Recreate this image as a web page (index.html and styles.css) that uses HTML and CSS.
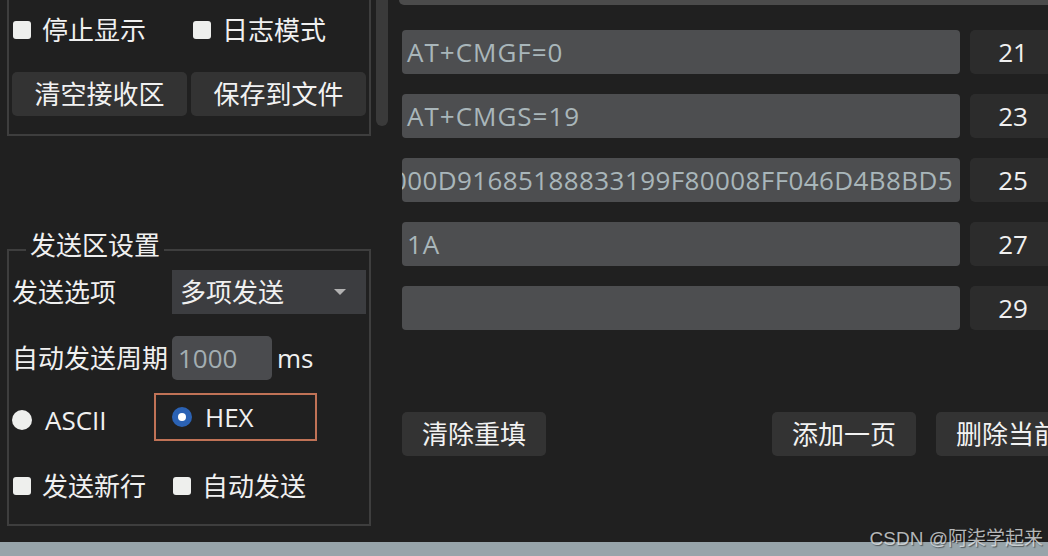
FILE: index.html
```html
<!DOCTYPE html>
<html lang="zh-CN">
<head>
<meta charset="utf-8">
<title>串口助手</title>
<link rel="stylesheet" href="styles.css">
</head>
<body>
<div class="app">
  <div class="main">
    <aside class="left">
      <div class="left-top">
        <section class="group group-recv">
          <div class="check-row">
            <label class="check"><span class="box"></span><span>停止显示</span></label>
            <label class="check"><span class="box"></span><span>日志模式</span></label>
          </div>
          <div class="btn-row">
            <button class="btn">清空接收区</button>
            <button class="btn">保存到文件</button>
          </div>
        </section>
        <div class="scrollbar"></div>
      </div>
      <fieldset class="group-send">
        <legend>发送区设置</legend>
        <div class="form">
          <span class="label">发送选项</span>
          <div class="combo"><span>多项发送</span><span class="arrow"></span></div>
          <span class="label">自动发送周期</span>
          <div class="period"><div class="spin">1000</div><span>ms</span></div>
          <label class="radio"><span class="dot"></span><span>ASCII</span></label>
          <label class="radio checked focused"><span class="dot"></span><span>HEX</span></label>
          <label class="check"><span class="box"></span><span>发送新行</span></label>
          <label class="check"><span class="box"></span><span>自动发送</span></label>
        </div>
      </fieldset>
    </aside>
    <section class="right">
      <div class="topbar"></div>
      <div class="rows">
        <div class="row"><div class="field">AT+CMGF=0</div><div class="num">21</div></div>
        <div class="row"><div class="field">AT+CMGS=19</div><div class="num">23</div></div>
        <div class="row"><div class="field scrolled"><span>0011000D91685188833199F80008FF046D4B8BD5</span></div><div class="num">25</div></div>
        <div class="row"><div class="field">1A</div><div class="num">27</div></div>
        <div class="row"><div class="field"></div><div class="num">29</div></div>
      </div>
      <div class="actions">
        <button class="btn action">清除重填</button>
        <button class="btn action push">添加一页</button>
        <button class="btn action">删除当前页</button>
      </div>
    </section>
  </div>
  <div class="statusbar"></div>
  <div class="watermark">CSDN @阿柒学起来</div>
</div>
</body>
</html>
```

FILE: styles.css
```css
* {
  box-sizing: border-box;
}

html, body {
  margin: 0;
  padding: 0;
}

body {
  width: 1048px;
  height: 556px;
  overflow: hidden;
  background: #202020;
  color: #f0f0f0;
  font-family: "Open Sans", "Noto Sans CJK SC", sans-serif;
  font-size: 26px;
}

.app {
  position: relative;
  width: 1048px;
  height: 556px;
  display: flex;
  flex-direction: column;
}

.main {
  height: 542px;
  display: flex;
  overflow: hidden;
}

/* ---------- left column ---------- */
.left {
  width: 399px;
  flex: none;
  padding-left: 7px;
  display: flex;
  flex-direction: column;
}

.left-top {
  display: flex;
  align-items: flex-start;
  gap: 5px;
}

.group {
  border: 2px solid #3e3e3e;
  border-top: none;
}

.group-recv {
  width: 364px;
  height: 136px;
  padding: 8px 3px 18px;
  display: flex;
  flex-direction: column;
  gap: 20px;
}

.scrollbar {
  width: 12px;
  height: 126px;
  background: #3a3a3a;
  border-radius: 0 0 6px 6px;
}

.check-row {
  height: 44px;
  display: flex;
  align-items: center;
  gap: 46px;
}

.check {
  display: flex;
  align-items: center;
  gap: 11px;
  padding-left: 1px;
  line-height: 30px;
}

.check .box {
  width: 18px;
  height: 18px;
  border-radius: 3px;
  background: #eeefed;
  flex: none;
}

.btn-row {
  display: flex;
  gap: 4px;
}

.btn {
  height: 44px;
  border: none;
  border-radius: 5px;
  background: #333333;
  color: #f2f2f2;
  font-family: "Open Sans", "Noto Sans CJK SC", sans-serif;
  font-size: 26px;
  line-height: 30px;
  padding: 0;
}

.btn-row .btn {
  flex: 1;
}

/* send settings group */
.group-send {
  width: 364px;
  margin: 96px 0 0;
  padding: 2px 3px 12px;
  border: 2px solid #3e3e3e;
  min-width: 0;
}

.group-send legend {
  margin-left: 14px;
  padding: 0 4px 10px;
  line-height: 26px;
  font-size: 26px;
}

.form {
  display: grid;
  grid-template-columns: 160px 194px;
  grid-template-rows: 44px 44px 36px 52px;
  row-gap: 22px;
  align-items: center;
}

.label {
  line-height: 30px;
}

.combo {
  height: 44px;
  background: #3c3d40;
  display: flex;
  align-items: center;
  justify-content: space-between;
  padding: 0 20px 0 8px;
  line-height: 30px;
}

.arrow {
  width: 0;
  height: 0;
  border-left: 6px solid transparent;
  border-right: 6px solid transparent;
  border-top: 6px solid #b2b2b2;
}

.period {
  display: flex;
  align-items: center;
  gap: 5px;
  line-height: 30px;
}

.spin {
  width: 100px;
  height: 44px;
  border-radius: 5px;
  background: #4a4b4e;
  color: #a3aeb2;
  padding-left: 6px;
  display: flex;
  align-items: center;
}

.radio {
  display: flex;
  align-items: center;
  gap: 13px;
  line-height: 30px;
}

.radio .dot {
  width: 20px;
  height: 20px;
  border-radius: 50%;
  background: #eeefed;
  flex: none;
}

.radio.checked .dot {
  background: #2b62b4;
  position: relative;
}

.radio.checked .dot::after {
  content: "";
  position: absolute;
  left: 6px;
  top: 6px;
  width: 8px;
  height: 8px;
  border-radius: 50%;
  background: #ffffff;
}

.radio.focused {
  margin-left: -16px;
  padding-left: 16px;
  width: 159px;
  height: 44px;
  margin-top: -6px;
  outline: 2px solid #c07256;
  box-shadow: 3px 3px 0 -1px #4a4a4a;
}

/* ---------- right column ---------- */
.right {
  width: 649px;
  flex: none;
  overflow: hidden;
  display: flex;
  flex-direction: column;
}

.topbar {
  height: 5px;
  background: #4b4b4b;
  border-radius: 0 0 0 5px;
}

.rows {
  margin-top: 25px;
  padding-left: 3px;
  display: flex;
  flex-direction: column;
  gap: 20px;
}

.row {
  display: flex;
  gap: 10px;
  width: 654px;
}

.field {
  width: 558px;
  height: 44px;
  flex: none;
  background: #4d4e50;
  border-radius: 4px;
  color: #a9b6ba;
  padding: 0 8px 0 5px;
  display: flex;
  align-items: center;
  white-space: nowrap;
  overflow: hidden;
  line-height: 30px;
  letter-spacing: 1px;
}

.field.scrolled {
  justify-content: flex-end;
  padding-right: 7px;
  letter-spacing: 0.4px;
}

.field.scrolled span {
  flex: none;
}

.num {
  width: 86px;
  height: 44px;
  flex: none;
  background: #2c2c2c;
  border-radius: 5px;
  display: flex;
  align-items: center;
  justify-content: center;
  line-height: 30px;
}

.actions {
  margin-top: 82px;
  padding-left: 3px;
  display: flex;
  gap: 20px;
  width: 720px;
}

.action {
  flex: none;
  padding: 0 20px;
}

.action.push {
  margin-left: 206px;
}

/* ---------- bottom ---------- */
.statusbar {
  height: 14px;
  background: #97a4aa;
}

.watermark {
  position: absolute;
  right: 5px;
  bottom: 6px;
  font-family: "Liberation Sans", "Noto Sans CJK SC", sans-serif;
  font-size: 19px;
  line-height: 22px;
  color: rgba(225, 228, 230, 0.78);
  text-shadow: 1px 1px 1px rgba(0, 0, 0, 0.45);
}
```
